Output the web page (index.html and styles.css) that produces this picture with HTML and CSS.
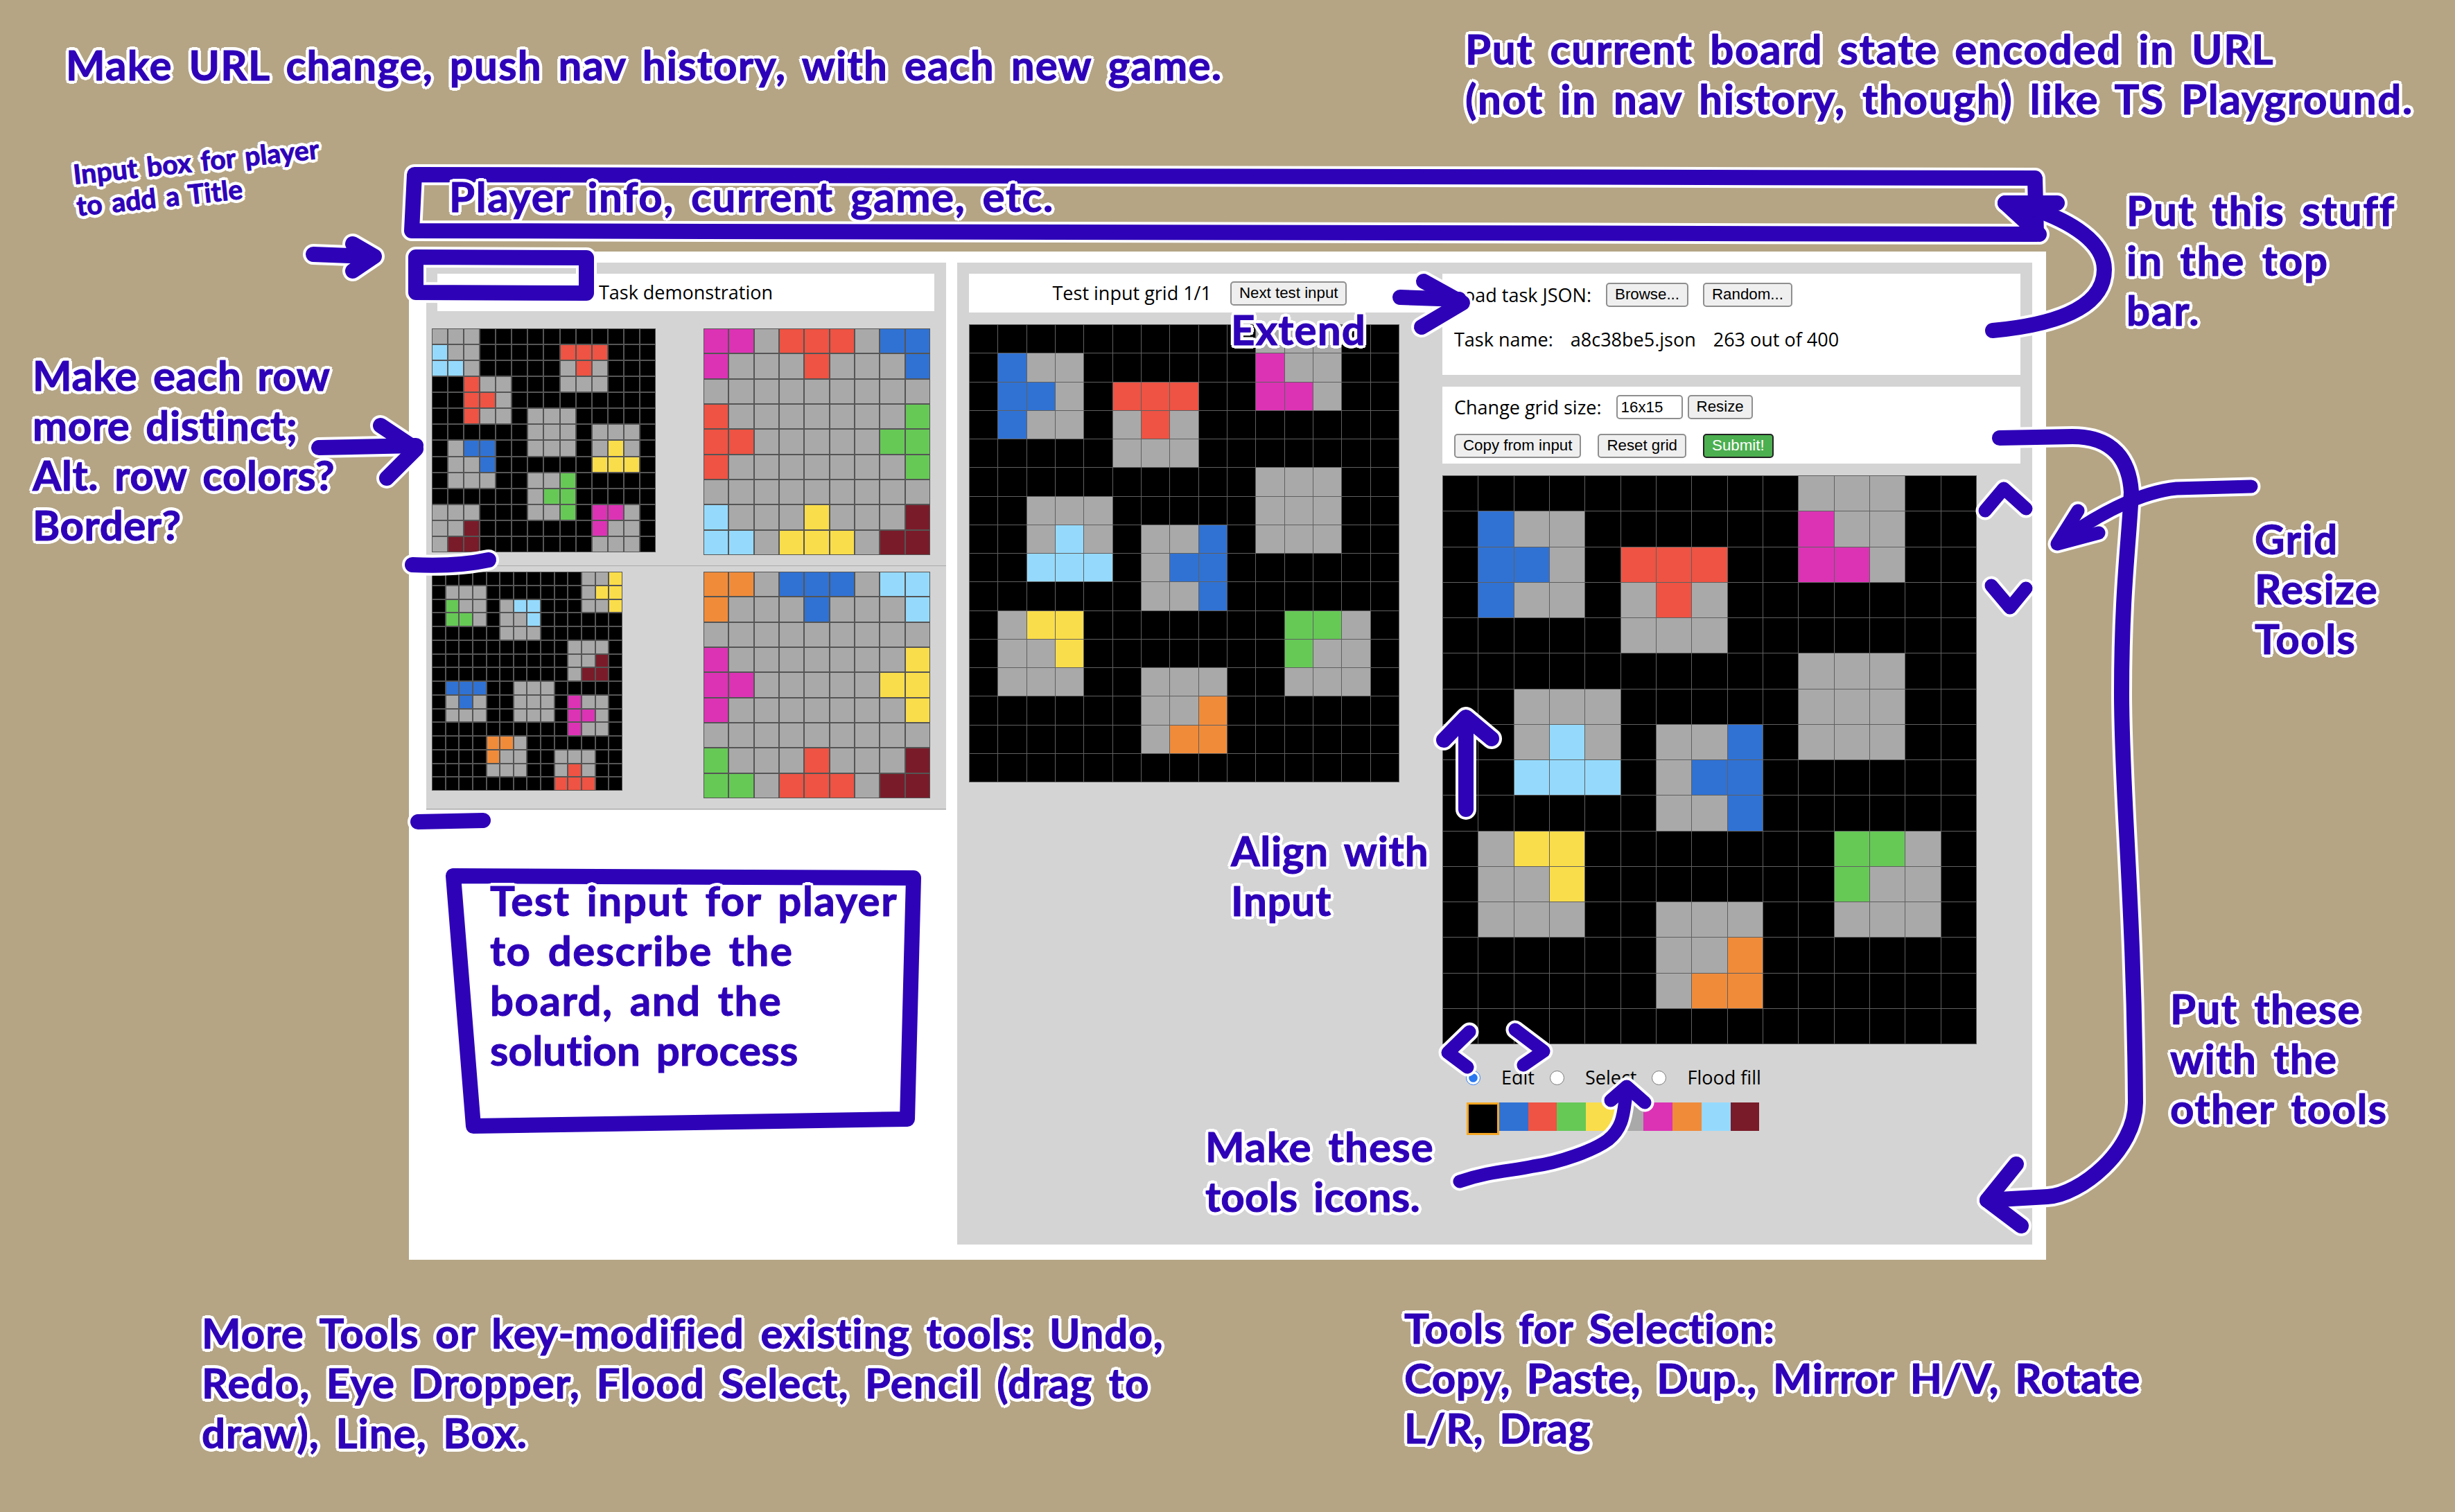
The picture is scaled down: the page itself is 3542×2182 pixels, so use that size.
FILE: index.html
```html
<!DOCTYPE html>
<html lang="en">
<head>
<meta charset="utf-8">
<title>ARC testing interface with annotations</title>
<link rel="stylesheet" href="styles.css">
</head>
<body>
<main class="app">
  <section class="demo">
    <div class="bar demo-title">Task demonstration</div>
    <div class="pair">
      <div class="pair-in"><div class="grid small g-a" data-rows="55500000000000,85500000222000,88500000525000,00255000555000,00225000000000,00255055500000,00000055505550,05110055505450,05510000004440,05550055300000,00000053300000,55500055306650,55900000006550,59900000005550"></div></div>
      <div class="grid small g-out" data-rows="665222511,655525551,555555555,255555553,225555533,255555553,555555555,855545559,885444599"></div>
    </div>
    <div class="pair">
      <div class="pair-in"><div class="grid small g-c" data-rows="00000000000554,05550000000544,03550588000554,03350558000000,00000555000000,00000000005550,00000000005590,00000000005990,01110055500000,05150055506550,05550055506650,00000000006550,00007750000000,00007550055500,00005550052500,00000000022200"></div></div>
      <div class="grid small g-out" data-rows="775111588,755515558,555555555,655555554,665555544,655555554,555555555,355525559,335222599"></div>
    </div>
  </section>

  <section class="work">
    <div class="work-left">
      <div class="bar test-bar">
        <span>Test input grid 1/1</span>
        <button class="btn" type="button">Next test input</button>
      </div>
      <div class="grid large g-input" data-rows="000000000055500,015500000065500,011502220066500,015505250000000,000005550000000,000000000055500,005550000055500,005850551055500,008880511000000,000000551000000,054400000003350,055400000003550,055500555005550,000000557000000,000000577000000,000000000000000"></div>
    </div>
    <div class="work-right">
      <div class="panel load-panel">
        <div class="row">
          <span>Load task JSON:</span>
          <button class="btn" type="button">Browse...</button>
          <button class="btn" type="button">Random...</button>
        </div>
        <div class="row task-row">
          <span>Task name:</span>
          <span>a8c38be5.json</span>
          <span>263 out of 400</span>
        </div>
      </div>
      <div class="panel edit-panel">
        <div class="row">
          <span>Change grid size:</span>
          <div class="size-group">
            <input class="size-input" type="text" value="16x15" aria-label="Grid size">
            <button class="btn" type="button">Resize</button>
          </div>
        </div>
        <div class="row actions">
          <button class="btn" type="button">Copy from input</button>
          <button class="btn" type="button">Reset grid</button>
          <button class="btn submit" type="button">Submit!</button>
        </div>
      </div>
      <div class="grid large g-output" data-rows="000000000055500,015500000065500,011502220066500,015505250000000,000005550000000,000000000055500,005550000055500,005850551055500,008880511000000,000000551000000,054400000003350,055400000003550,055500555005550,000000557000000,000000577000000,000000000000000"></div>
      <div class="tools">
        <input type="radio" name="tool" id="t-edit" checked><label for="t-edit">Edit</label>
        <input type="radio" name="tool" id="t-select"><label for="t-select">Select</label>
        <input type="radio" name="tool" id="t-flood"><label for="t-flood">Flood fill</label>
      </div>
      <div class="palette">
        <div class="swatch c0 selected"></div>
        <div class="swatch c1"></div>
        <div class="swatch c2"></div>
        <div class="swatch c3"></div>
        <div class="swatch c4"></div>
        <div class="swatch c5"></div>
        <div class="swatch c6"></div>
        <div class="swatch c7"></div>
        <div class="swatch c8"></div>
        <div class="swatch c9"></div>
      </div>
    </div>
  </section>
</main>

<svg class="marks" width="3542" height="2182" viewBox="0 0 3542 2182" aria-hidden="true">
  <defs>
    <g id="s22">
      <path d="M594 333 L598 252 L2936 257 L2938 338 Z"/>
      <path d="M600 371 L846 372 L846 423 L600 422 Z"/>
      <path d="M595 815 Q660 818 705 808"/>
      <path d="M2875 477 C2950 470 3036 450 3036 389 C3036 350 2990 320 2930 300 L2893 293"/>
      <path d="M2968 293 L2893 293 L2942 338"/>
      <path d="M2885 632 L2990 630 C3050 630 3072 665 3075 710 C3072 780 3061 850 3061 1000 C3061 1150 3079 1300 3081 1590 C3082 1660 3000 1725 2954 1727 L2867 1732"/>
      <path d="M2909 1680 L2867 1732 L2916 1769"/>
      <path d="M603 1186 L697 1184"/>
      <path d="M654 1264 L1318 1267 L1309 1615 L683 1625 Z"/>
      <path d="M2115 1168 L2115 1040"/>
      <path d="M2083 1068 L2115 1035 L2152 1066"/>
      <path d="M452 367 L530 370"/>
      <path d="M509 352 L540 370 L509 391"/>
      <path d="M460 646 L600 643"/>
      <path d="M549 614 L600 648 L558 690"/>
      <path d="M2020 429 L2105 432"/>
      <path d="M2054 406 L2110 437 L2051 472"/>
    </g>
    <g id="s18">
      <path d="M2864 737 L2891 705 L2923 734"/>
      <path d="M2873 845 L2900 877 L2923 849"/>
      <path d="M2120 1489 L2089 1519 L2117 1540"/>
      <path d="M2186 1486 L2227 1517 L2198 1537"/>
      <path d="M2106 1705 C2150 1690 2180 1690 2212 1683 C2250 1678 2300 1660 2320 1645 C2345 1625 2342 1600 2347 1575"/>
      <path d="M2324 1588 L2347 1568 L2373 1591"/>
      <path d="M3248 702 L3140 705 C3090 710 3030 740 2975 780"/>
      <path d="M2998 737 L2968 785 L3028 769"/>
    </g>
  </defs>
  <use class="halo w22" href="#s22"/>
  <use class="halo w18" href="#s18"/>
  <use class="ink w22" href="#s22"/>
  <use class="ink w18" href="#s18"/>
</svg>

<div class="note n-url">Make URL change, push nav history, with each new game.</div>
<div class="note n-state">Put current board state encoded in URL
(not in nav history, though) like TS Playground.</div>
<div class="note n-title">Input box for player
to add a Title</div>
<div class="note n-info">Player info, current game, etc.</div>
<div class="note n-top">Put this stuff
in the top
bar.</div>
<div class="note n-row">Make each row
more distinct;
Alt. row colors?
Border?</div>
<div class="note n-extend">Extend</div>
<div class="note n-align">Align with
Input</div>
<div class="note n-icons">Make these
<span class="tight">tools icons.</span></div>
<div class="note n-test">Test input for player
to describe the
board, and the
<span class="tight">solution process</span></div>
<div class="note n-resize">Grid
Resize
Tools</div>
<div class="note n-these">Put these
with the
other tools</div>
<div class="note n-more">More Tools or key-modified existing tools: Undo,
Redo, Eye Dropper, Flood Select, Pencil (drag to
draw), Line, Box.</div>
<div class="note n-sel">Tools for Selection:
Copy, Paste, Dup., Mirror H/V, Rotate
L/R, Drag</div>
<script src="grid.js"></script>
</body>
</html>
```

FILE: styles.css
```css
* { box-sizing: border-box; }
html, body { margin: 0; }
body {
  position: relative;
  width: 3542px;
  height: 2182px;
  overflow: hidden;
  background: #b5a585;
  padding: 363px 0 0 590px;
  font: 27px/1.3 "Open Sans", sans-serif;
  color: #000;
}

/* application */
.app {
  display: flex;
  align-items: flex-start;
  gap: 16px;
  width: 2362px;
  height: 1455px;
  padding: 16px 20px 22px 25px;
  background: #fff;
}
.demo {
  flex: 0 0 750px;
  padding-top: 16px;
  padding-bottom: 1px;
  background: #d4d4d4;
}
.bar {
  display: flex;
  align-items: center;
  justify-content: center;
  background: #fff;
}
.demo-title {
  height: 54px;
  margin: 0 17px 17px 16px;
}
.pair {
  display: flex;
  align-items: flex-start;
  padding: 8px 8px 15px;
  border-bottom: 1px solid #aaa;
}
.pair-in { flex: 0 0 392px; }

.work {
  flex: 1;
  align-self: stretch;
  display: flex;
  gap: 17px;
  padding: 16px 17px;
  background: #d4d4d4;
}
.work-left { flex: 0 0 666px; }
.work-right { flex: 0 0 834px; }
.test-bar {
  height: 56px;
  gap: 27px;
  margin-bottom: 17px;
}

/* grids */
.grid {
  display: grid;
  grid-template-columns: repeat(var(--cols), 1fr);
  grid-template-rows: repeat(var(--rows), 1fr);
  background: #555;
}
.grid.small { gap: 2px; padding: 1px; }
.grid.large { gap: 1px; padding: 1px; background: #606060; }
.g-a { width: 323px; height: 323px; }
.g-c { width: 275px; height: 316px; }
.g-out { width: 327px; height: 327px; }
.g-input { width: 621px; height: 661px; }
.g-output { width: 771px; height: 821px; }

.c0 { background: #000; }
.c1 { background: #3072d4; }
.c2 { background: #ee5343; }
.c3 { background: #66c956; }
.c4 { background: #fadd4a; }
.c5 { background: #a9a9a9; }
.c6 { background: #dc33b5; }
.c7 { background: #f08b3a; }
.c8 { background: #95dafd; }
.c9 { background: #7a1b29; }

/* side panels */
.panel {
  background: #fff;
  padding-left: 17px;
  margin-bottom: 17px;
}
.load-panel { height: 146px; padding-top: 13px; }
.edit-panel { height: 111px; padding-top: 12px; }
.row {
  display: flex;
  align-items: center;
  gap: 21px;
}
.task-row { gap: 25px; margin-top: 29px; }
.actions { gap: 24px; margin-top: 21px; }
.size-group { display: flex; gap: 7px; }

.btn {
  height: 35px;
  padding: 0 11px;
  border: 2px solid #8f8f8f;
  border-radius: 5px;
  background: #efefef;
  color: #000;
  font: 22.3px/1 "Liberation Sans", Arial, sans-serif;
}
.submit {
  background: #4caf50;
  border-color: #222;
  color: #fff;
}
.size-input {
  width: 96px;
  height: 35px;
  padding: 0 5px;
  border: 2px solid #8f8f8f;
  border-radius: 5px;
  font: 22.3px/1 "Liberation Sans", Arial, sans-serif;
}

.tools {
  display: flex;
  align-items: center;
  height: 36px;
  margin: 30px 0 0 34px;
}
.tools input {
  width: 21px;
  height: 21px;
  margin: 0 30px 0 0;
  accent-color: #2a78f0;
}
.tools label { margin-right: 22px; }

.palette {
  display: flex;
  align-items: flex-start;
  margin: 18px 0 0 35px;
}
.swatch { width: 41.7px; height: 41px; }
.swatch.selected {
  width: 47px;
  height: 47px;
  border: 3px solid #f5a623;
}

/* annotation layer */
.marks {
  position: absolute;
  left: 0;
  top: 0;
  pointer-events: none;
}
.marks use {
  fill: none;
  stroke-linecap: round;
  stroke-linejoin: round;
}
.ink { stroke: #2e03b8; }
.halo { stroke: #fff; }
.ink.w22 { stroke-width: 22px; }
.ink.w18 { stroke-width: 19px; }
.halo.w22 { stroke-width: 30px; }
.halo.w18 { stroke-width: 27px; }

.note {
  position: absolute;
  white-space: pre;
  font: 700 60px/72px Lato, sans-serif;
  color: #2e03b8;
  -webkit-text-stroke: 1px #2e03b8;
  word-spacing: 8px;
  letter-spacing: 1.2px;
  text-shadow:
    5px 0 0 #fff, -5px 0 0 #fff, 0 5px 0 #fff, 0 -5px 0 #fff,
    4px 3px 0 #fff, -4px 3px 0 #fff, 4px -3px 0 #fff, -4px -3px 0 #fff,
    3px 4px 0 #fff, -3px 4px 0 #fff, 3px -4px 0 #fff, -3px -4px 0 #fff;
}
.note .tight { letter-spacing: 0.2px; }
.n-url { left: 95px; top: 57px; }
.n-state { left: 2114px; top: 34px; letter-spacing: 1.7px; }
.n-title {
  left: 108px;
  top: 228px;
  font-size: 39px;
  line-height: 46px;
  word-spacing: 4px;
  letter-spacing: 0.2px;
  transform: rotate(-6deg);
  transform-origin: 0 50%;
}
.n-info { left: 648px; top: 247px; letter-spacing: 1.6px; }
.n-top { left: 3068px; top: 267px; letter-spacing: 1.9px; }
.n-row { left: 47px; top: 505px; letter-spacing: 0.5px; }
.n-extend { left: 1776px; top: 439px; }
.n-align { left: 1776px; top: 1191px; letter-spacing: 0.7px; }
.n-icons { left: 1739px; top: 1618px; }
.n-test { left: 707px; top: 1263px; letter-spacing: 1.5px; }
.n-resize { left: 3253px; top: 741px; letter-spacing: 1.5px; }
.n-these { left: 3131px; top: 1419px; letter-spacing: 1.4px; }
.n-more { left: 291px; top: 1887px; letter-spacing: 1px; }
.n-sel { left: 2026px; top: 1880px; letter-spacing: 0.6px; }
```

FILE: grid.js
```js
document.querySelectorAll('.grid').forEach(function (grid) {
  var rows = grid.dataset.rows.split(',');
  grid.style.setProperty('--rows', rows.length);
  grid.style.setProperty('--cols', rows[0].length);
  rows.forEach(function (row) {
    row.split('').forEach(function (value) {
      var cell = document.createElement('div');
      cell.className = 'c' + value;
      grid.appendChild(cell);
    });
  });
});
```
